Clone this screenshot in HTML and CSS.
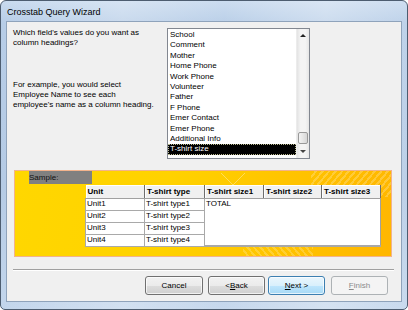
FILE: index.html
```html
<!DOCTYPE html>
<html>
<head>
<meta charset="utf-8">
<link rel="stylesheet" href="styles.css">
</head>
<body>
<div class="window">
  <div class="titlebar"><span class="title">Crosstab Query Wizard</span></div>
  <div class="client">
    <div class="top">
      <div class="prompt">
        <p class="q">Which field's values do you want as<br>column headings?</p>
        <p class="ex">For example, you would select<br>Employee Name to see each<br>employee's name as a column heading.</p>
      </div>
      <div class="listbox">
        <ul class="items">
          <li>School</li>
          <li>Comment</li>
          <li>Mother</li>
          <li>Home Phone</li>
          <li>Work Phone</li>
          <li>Volunteer</li>
          <li>Father</li>
          <li>F Phone</li>
          <li>Emer Contact</li>
          <li>Emer Phone</li>
          <li>Additional Info</li>
          <li class="selected">T-shirt size</li>
        </ul>
        <div class="scrollbar">
          <div class="sb-btn"><span class="arrow-up"></span></div>
          <div class="sb-track"></div>
          <div class="sb-thumb"></div>
          <div class="sb-btn"><span class="arrow-down"></span></div>
        </div>
      </div>
    </div>
    <div class="sample">
      <div class="sample-label">Sample:</div>
      <table class="grid">
        <colgroup>
          <col class="w59"><col class="w60"><col class="w59"><col class="w58"><col class="w59">
        </colgroup>
        <thead>
          <tr><th>Unit</th><th>T-shirt type</th><th>T-shirt size1</th><th>T-shirt size2</th><th>T-shirt size3</th></tr>
        </thead>
        <tbody>
          <tr><td class="c">Unit1</td><td class="c">T-shirt type1</td><td class="v">TOTAL</td><td class="v"></td><td class="v r"></td></tr>
          <tr><td class="c">Unit2</td><td class="c">T-shirt type2</td><td class="v"></td><td class="v"></td><td class="v r"></td></tr>
          <tr><td class="c">Unit3</td><td class="c">T-shirt type3</td><td class="v"></td><td class="v"></td><td class="v r"></td></tr>
          <tr><td class="c">Unit4</td><td class="c">T-shirt type4</td><td class="v b"></td><td class="v b"></td><td class="v r b"></td></tr>
        </tbody>
      </table>
    </div>
    <div class="separator"></div>
    <div class="buttons">
      <div class="btn cancel">Cancel</div>
      <div class="btn back">&lt; <u>B</u>ack</div>
      <div class="btn next"><u>N</u>ext &gt;</div>
      <div class="btn finish disabled"><u>F</u>inish</div>
    </div>
  </div>
</div>
</body>
</html>
```
FILE: styles.css
```css
* { box-sizing: border-box; }
html, body { margin: 0; padding: 0; }
body {
  width: 408px;
  height: 310px;
  overflow: hidden;
  background: #ffffff;
  font-family: "Liberation Sans", Arial, sans-serif;
  font-size: 8px;
  color: #000;
}
.window {
  width: 408px;
  height: 310px;
  border: 1px solid #4d5d70;
  border-radius: 6px 6px 5px 5px;
  padding: 0 5px 7px 5px;
  display: flex;
  flex-direction: column;
  background:
    linear-gradient(to right, rgba(255,255,255,0.0) 0%, rgba(255,255,255,0.25) 30%, rgba(255,255,255,0.05) 55%, rgba(255,255,255,0.3) 80%, rgba(255,255,255,0.1) 100%),
    linear-gradient(to bottom, #c9dbef 0px, #b7cde7 22px, #b5cbe5 60%, #c3d6ec 100%);
}
.titlebar {
  height: 21px;
  display: flex;
  align-items: center;
  padding: 1px 0 0 1px;
}
.title {
  font-size: 9px;
  color: #000;
}
.client {
  flex: 1;
  border: 1px solid #8fa3bb;
  background: #f0f0f0;
  padding: 6px;
  display: flex;
  flex-direction: column;
}
.top {
  display: flex;
  height: 131px;
}
.prompt {
  width: 154px;
  line-height: 10px;
  white-space: nowrap;
}
.prompt p { margin: 0; }
.prompt .ex { margin-top: 32px; }
.listbox {
  width: 143px;
  height: 131px;
  border: 1px solid #828790;
  background: #fff;
  display: flex;
}
.items {
  flex: 1;
  list-style: none;
  margin: 0;
  padding: 1px 0 0 0;
  overflow: hidden;
}
.items li {
  height: 10.4px;
  line-height: 10.4px;
  padding-left: 2px;
  white-space: nowrap;
}
.items li.selected {
  background: #000;
  color: #fff;
  outline: 1px dotted #b8b890;
  outline-offset: -1px;
}
.scrollbar {
  width: 13px;
  display: flex;
  flex-direction: column;
  background: linear-gradient(to right, #e3e3e3, #f4f4f4 30%, #f4f4f4 70%, #e6e6e6);
  border-left: 1px solid #ececec;
}
.sb-btn {
  height: 13px;
  display: flex;
  align-items: center;
  justify-content: center;
}
.arrow-up {
  width: 0; height: 0;
  border-left: 3px solid transparent;
  border-right: 3px solid transparent;
  border-bottom: 3px solid #222;
}
.arrow-down {
  width: 0; height: 0;
  border-left: 3px solid transparent;
  border-right: 3px solid transparent;
  border-top: 3px solid #444;
}
.sb-track { flex: 1; }
.sb-thumb {
  height: 12px;
  margin: 0 1px 1px 1px;
  border: 1px solid #999;
  border-radius: 2px;
  background: linear-gradient(to right, #f3f3f3, #e6e6e6 50%, #d6d6d6);
}
.sample {
  margin: 11px 0 0 1px;
  width: 378px;
  height: 87px;
  border: 1px solid #f2b38c;
  padding-left: 14px;
  background:
    repeating-linear-gradient(-50deg, rgba(255,255,255,0) 0px, rgba(255,255,255,0) 3px, rgba(255,255,255,0.22) 3px, rgba(255,255,255,0.22) 5px) right 0 top 0 / 80px 26px no-repeat,
    repeating-linear-gradient(50deg, rgba(255,255,255,0) 0px, rgba(255,255,255,0) 3px, rgba(255,255,255,0.2) 3px, rgba(255,255,255,0.2) 5px) left 228px bottom 0 / 70px 10px no-repeat,
    linear-gradient(45deg, rgba(255,255,255,0) 46%, rgba(255,255,255,0.35) 50%, rgba(255,255,255,0) 54%) left 206px top 2px / 12px 12px no-repeat,
    linear-gradient(-45deg, rgba(255,255,255,0) 46%, rgba(255,255,255,0.35) 50%, rgba(255,255,255,0) 54%) left 218px top 2px / 12px 12px no-repeat,
    linear-gradient(100deg, #ffd700 0%, #ffd200 40%, #ffc400 70%, #ffb600 100%);
}
.sample-label {
  width: 63px;
  height: 13px;
  line-height: 13px;
  background: #808080;
  color: #111;
}
.grid {
  border-collapse: collapse;
  table-layout: fixed;
  width: 295px;
  margin: 1px 0 0 56px;
}
.grid col.w59 { width: 59px; }
.grid col.w60 { width: 60px; }
.grid col.w58 { width: 58px; }
.grid th {
  height: 13px;
  padding: 0 0 0 2px;
  background: #f0f0f0;
  font-weight: bold;
  text-align: left;
  white-space: nowrap;
  overflow: hidden;
  border-right: 1px solid #6e6e6e;
  border-bottom: 1px solid #a0a0a0;
  box-shadow: inset 1px 1px 0 #ffffff;
  color: #000;
}
.grid td {
  height: 12px;
  padding: 0 0 0 1px;
  background: #fff;
  white-space: nowrap;
  overflow: hidden;
  color: #000;
  line-height: 10px;
}
.grid td.c { border: 1px solid #a9a9a9; }
.grid td.v { border: none; }
.grid td.r { border-right: 1px solid #a0a0a0; }
.grid td.b { border-bottom: 2px solid #a8a8a8; }
.separator {
  margin-top: 12px;
  width: 381px;
  height: 2px;
  border-top: 1px solid #a0a0a0;
  border-bottom: 1px solid #ffffff;
}
.buttons {
  margin-top: 5px;
  display: flex;
  justify-content: flex-end;
  padding-right: 7px;
}
.btn {
  width: 57px;
  height: 19px;
  border: 1px solid #707070;
  border-radius: 3px;
  display: flex;
  align-items: center;
  justify-content: center;
  background: linear-gradient(to bottom, #f2f2f2 0%, #ebebeb 50%, #dddddd 51%, #cfcfcf 100%);
  box-shadow: inset 0 0 0 1px rgba(255,255,255,0.7);
  color: #000;
}
.btn.cancel { width: 58px; }
.btn.back { margin-left: 5px; }
.btn.next {
  margin-left: 3px;
  border-color: #3c7fb1;
  background: linear-gradient(to bottom, #eaf6fd 0%, #d9f0fc 50%, #bee6fd 51%, #a7d9f5 100%);
}
.btn.finish { margin-left: 6px; }
.btn.disabled {
  border-color: #adb2b5;
  background: #f4f4f4;
  color: #8b8b8b;
  box-shadow: none;
}
.btn u { text-decoration: underline; }
```
